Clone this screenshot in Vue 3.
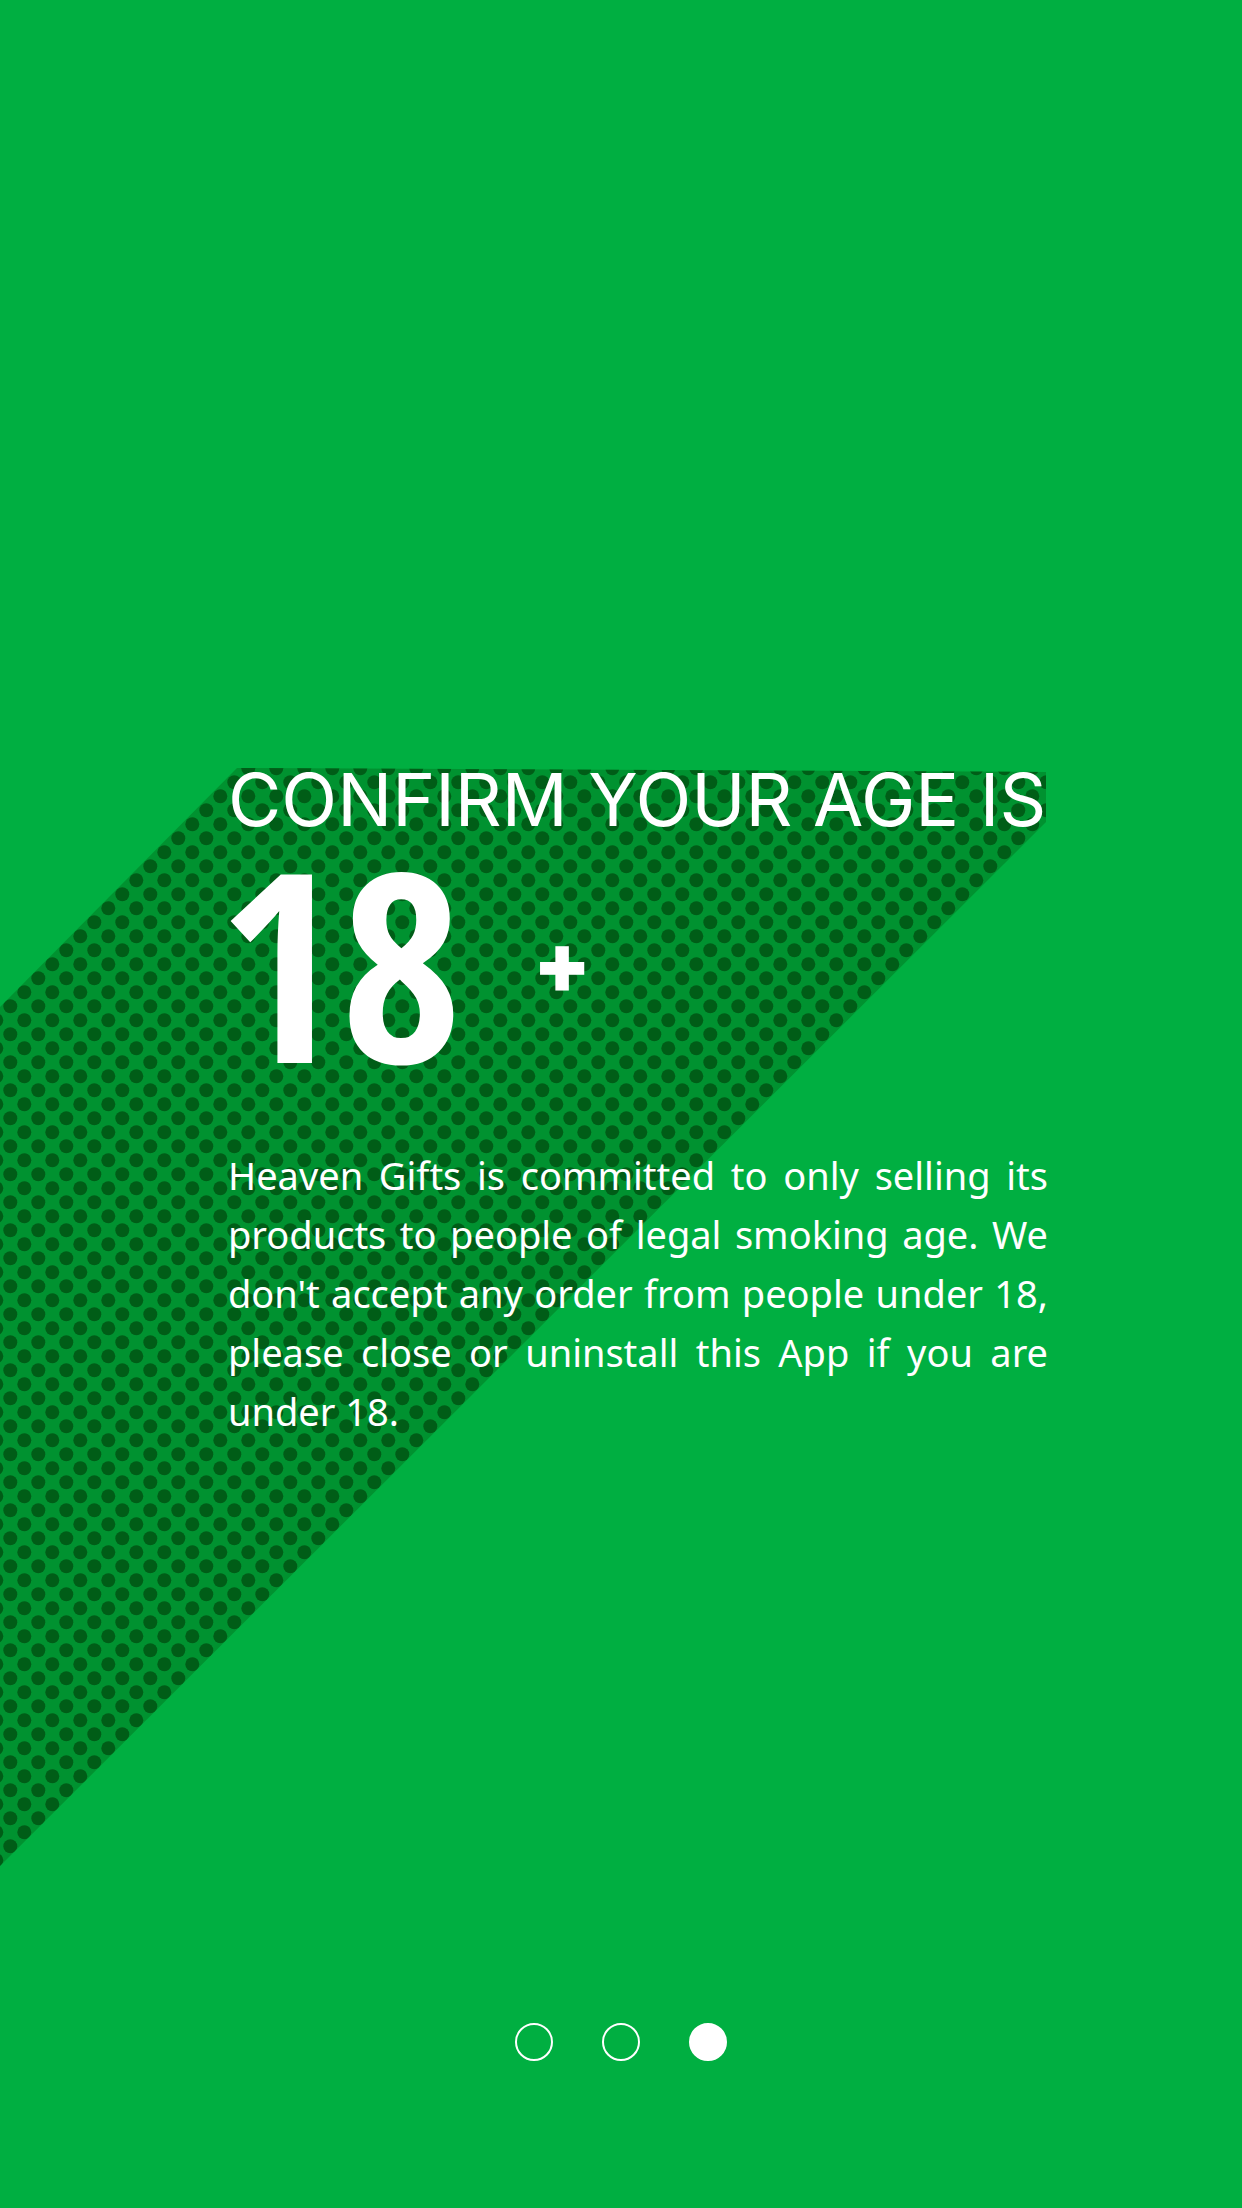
<script setup>
import { ref } from 'vue'

const slides = [1, 2, 3]
const current = ref(3)
</script>

<template>
  <main class="screen">
    <svg class="backdrop" width="1046" height="1098" viewBox="0 0 1046 1098" aria-hidden="true">
      <defs>
        <pattern id="halftone" width="28" height="28" patternUnits="userSpaceOnUse">
          <circle cx="10.3" cy="14.2" r="7" />
          <circle cx="24.3" cy="0.2" r="7" />
          <circle cx="24.3" cy="28.2" r="7" />
          <circle cx="-3.7" cy="0.2" r="7" />
          <circle cx="-3.7" cy="28.2" r="7" />
        </pattern>
        <path id="band" d="M0 239 237 0 1046 4V54L0 1098Z" />
      </defs>
      <use href="#band" fill="#009230" />
      <use href="#band" fill="url(#halftone)" />
    </svg>

    <section class="content">
      <h1 class="title">CONFIRM YOUR AGE IS</h1>
      <p class="age"><strong class="number">18</strong><span class="plus">+</span></p>
      <p class="notice">
        Heaven Gifts is committed to only selling its products to people of legal smoking age. We
        don't accept any order from people under 18, please close or uninstall this App if you are
        under 18.
      </p>
    </section>

    <nav class="pager" aria-label="Slides">
      <button
        v-for="n in slides"
        :key="n"
        type="button"
        class="dot"
        :class="{ active: n === current }"
        :aria-label="`Slide ${n}`"
        @click="current = n"
      ></button>
    </nav>
  </main>
</template>

<style>
body {
  background: #00af41;
}
</style>

<style scoped>
.screen {
  position: relative;
  display: flex;
  flex-direction: column;
  min-height: 100vh;
  box-sizing: border-box;
  padding: 752px 0 147px;
  overflow: hidden;
  background: #00af41;
  color: #fff;
}
.backdrop {
  position: absolute;
  top: 768px;
  left: 0;
}
.backdrop circle {
  fill: #005d17;
}
.content {
  position: relative;
  max-width: 820px;
  margin-left: 228px;
}
.title {
  margin: 0;
  font: 400 73px/96px Inter, "Liberation Sans", sans-serif;
  white-space: nowrap;
}
.age {
  display: flex;
  align-items: flex-start;
  margin: 0 0 68px -10px;
}
.number {
  width: 315px;
  font: 700 264px/226px "Open Sans Condensed", "Roboto Condensed", sans-serif;
}
.plus {
  font: 900 84px/230px Inter, "Liberation Sans", sans-serif;
}
.notice {
  margin: 0;
  font: 38px/59px "Noto Sans", sans-serif;
  text-align: justify;
}
.pager {
  display: flex;
  justify-content: center;
  gap: 49px;
  margin-top: auto;
}
.dot {
  width: 38px;
  height: 38px;
  padding: 0;
  border: 2px solid #fff;
  border-radius: 50%;
  background: transparent;
}
.dot.active {
  background: #fff;
}
</style>
